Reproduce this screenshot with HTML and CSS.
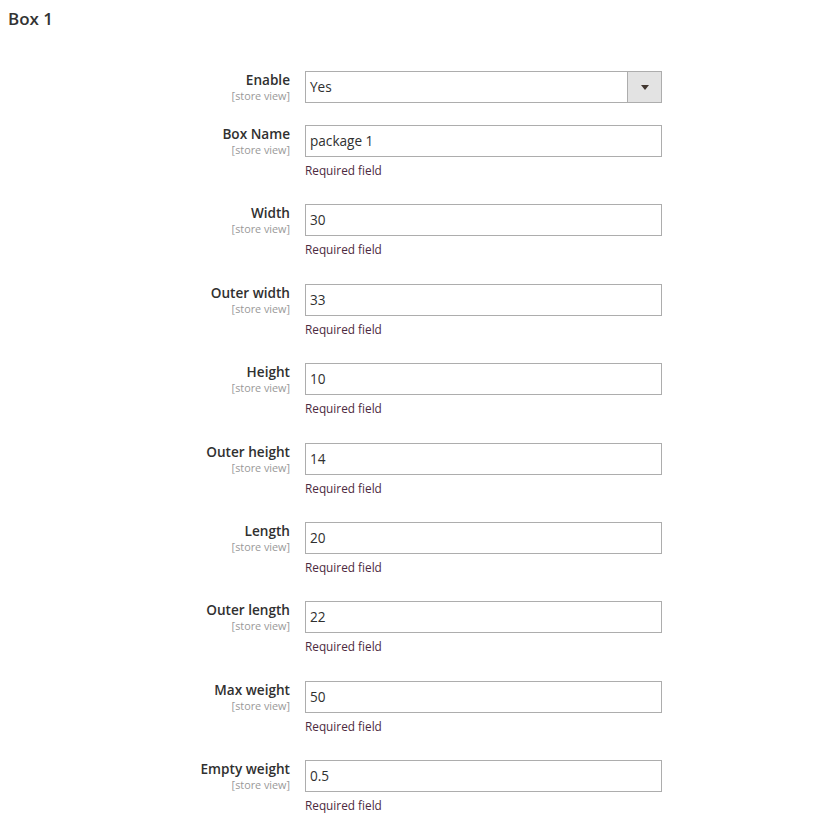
FILE: index.html
```html
<!DOCTYPE html>
<html>
<head>
<meta charset="utf-8">
<link rel="stylesheet" href="styles.css">
</head>
<body>
<div class="page">
  <h2 class="title">Box 1</h2>
  <div class="form">
    <div class="row row-select">
      <div class="label"><span class="name">Enable</span><span class="scope">[store view]</span></div>
      <div class="control">
        <div class="select"><span class="value">Yes</span><span class="arrow"></span></div>
      </div>
    </div>
    <div class="row">
      <div class="label"><span class="name">Box Name</span><span class="scope">[store view]</span></div>
      <div class="control"><div class="input">package 1</div><div class="note">Required field</div></div>
    </div>
    <div class="row">
      <div class="label"><span class="name">Width</span><span class="scope">[store view]</span></div>
      <div class="control"><div class="input">30</div><div class="note">Required field</div></div>
    </div>
    <div class="row">
      <div class="label"><span class="name">Outer width</span><span class="scope">[store view]</span></div>
      <div class="control"><div class="input">33</div><div class="note">Required field</div></div>
    </div>
    <div class="row">
      <div class="label"><span class="name">Height</span><span class="scope">[store view]</span></div>
      <div class="control"><div class="input">10</div><div class="note">Required field</div></div>
    </div>
    <div class="row">
      <div class="label"><span class="name">Outer height</span><span class="scope">[store view]</span></div>
      <div class="control"><div class="input">14</div><div class="note">Required field</div></div>
    </div>
    <div class="row">
      <div class="label"><span class="name">Length</span><span class="scope">[store view]</span></div>
      <div class="control"><div class="input">20</div><div class="note">Required field</div></div>
    </div>
    <div class="row">
      <div class="label"><span class="name">Outer length</span><span class="scope">[store view]</span></div>
      <div class="control"><div class="input">22</div><div class="note">Required field</div></div>
    </div>
    <div class="row">
      <div class="label"><span class="name">Max weight</span><span class="scope">[store view]</span></div>
      <div class="control"><div class="input">50</div><div class="note">Required field</div></div>
    </div>
    <div class="row">
      <div class="label"><span class="name">Empty weight</span><span class="scope">[store view]</span></div>
      <div class="control"><div class="input">0.5</div><div class="note">Required field</div></div>
    </div>
  </div>
</div>
</body>
</html>
```
FILE: styles.css
```css
html, body {
  margin: 0;
  padding: 0;
  background: #ffffff;
}
body {
  font-family: "Open Sans", "Noto Sans", sans-serif;
  color: #303030;
}
.page {
  padding: 9px 8px 0 8px;
}
.title {
  margin: 0;
  font-size: 17px;
  font-weight: 600;
  line-height: 20px;
  color: #333333;
}
.form {
  margin-top: 42px;
  display: flex;
  flex-direction: column;
}
.row {
  display: grid;
  grid-template-columns: 282px 357px;
  column-gap: 15px;
  margin-bottom: 25.4px;
}
.row-select {
  margin-bottom: 22px;
}
.label {
  display: flex;
  flex-direction: column;
  align-items: flex-end;
  text-align: right;
}
.name {
  font-size: 13.6px;
  font-weight: 600;
  line-height: 18px;
  color: #303030;
}
.scope {
  font-size: 10.8px;
  line-height: 13px;
  color: #999999;
}
.control {
  display: flex;
  flex-direction: column;
}
.input, .select {
  box-sizing: border-box;
  height: 32px;
  border: 1px solid #adadad;
  font-size: 13.6px;
  line-height: 30px;
  padding: 0 4px;
  color: #303030;
  background: #fff;
}
.select {
  display: flex;
  padding-right: 0;
}
.value {
  flex: 1;
}
.arrow {
  width: 33px;
  border-left: 1px solid #adadad;
  background: #e3e3e3;
  position: relative;
}
.arrow::after {
  content: "";
  position: absolute;
  left: 13px;
  top: 13px;
  border-left: 4px solid transparent;
  border-right: 4px solid transparent;
  border-top: 5px solid #41362f;
}
.note {
  margin-top: 5px;
  font-size: 11.8px;
  line-height: 17px;
  color: #4d2a40;
}
```
